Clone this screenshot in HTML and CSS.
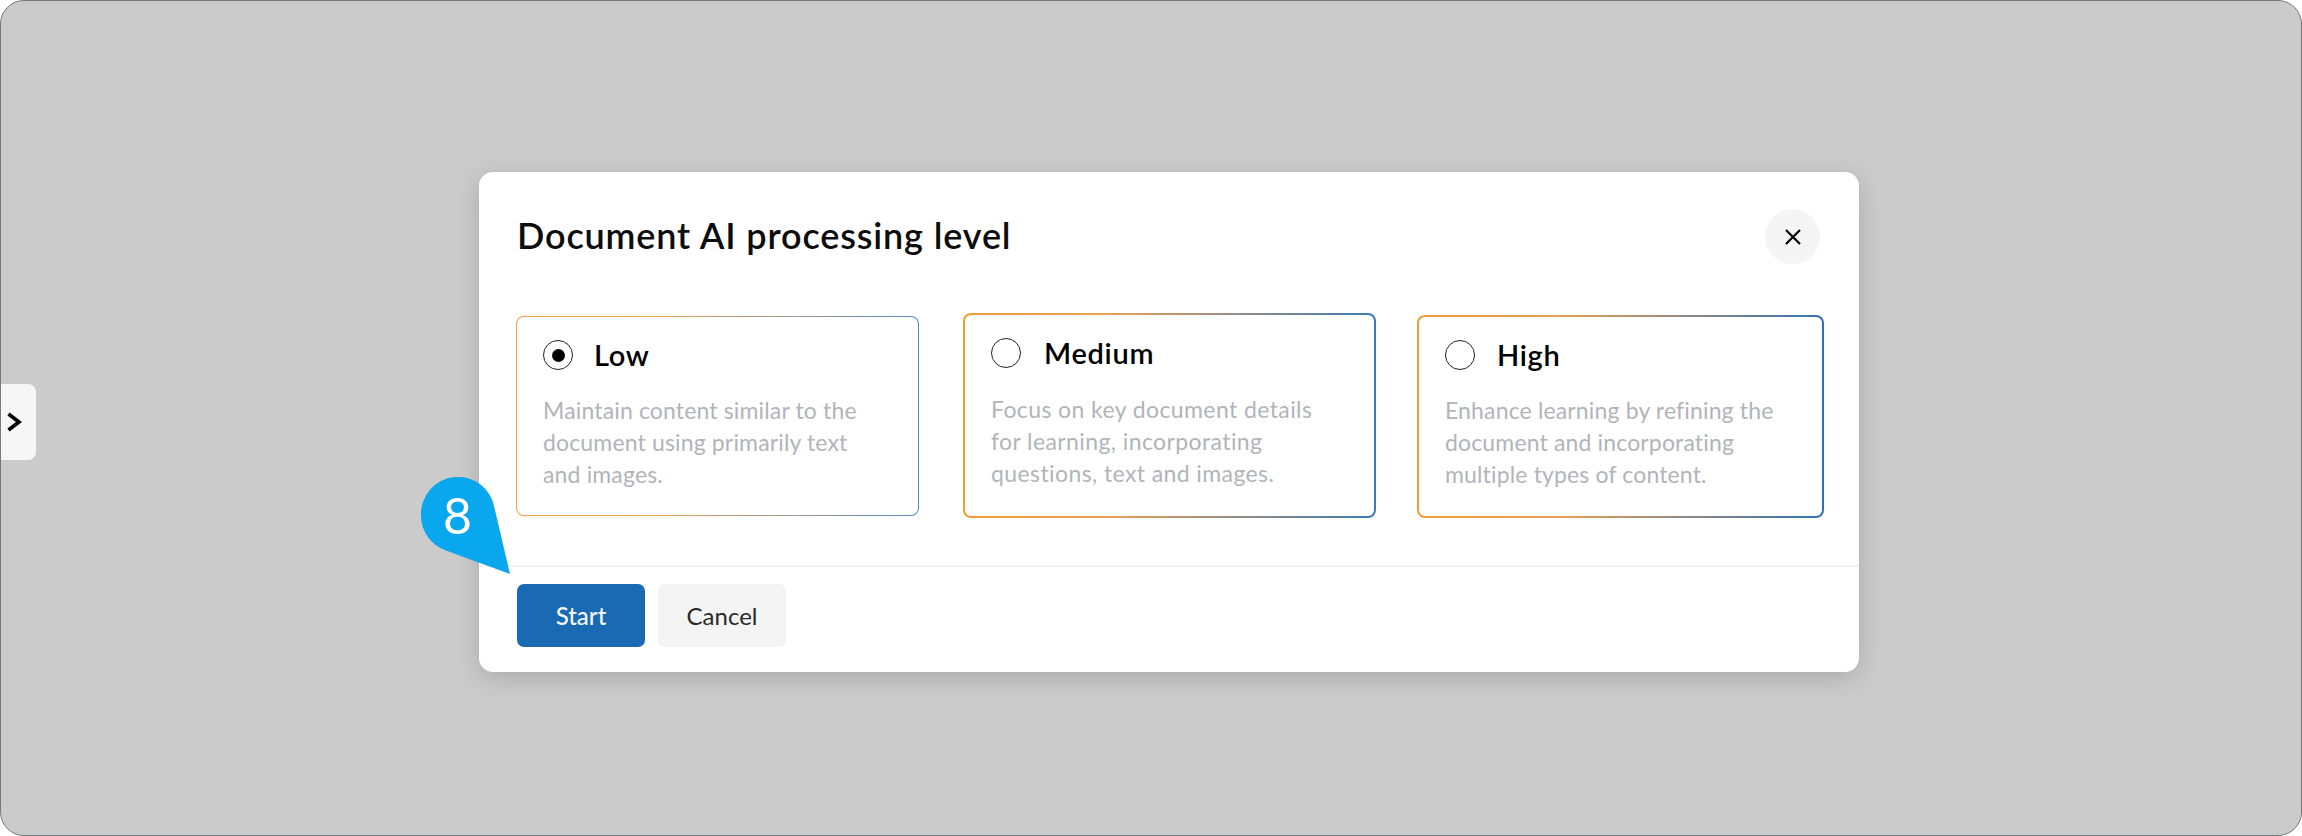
FILE: index.html
```html
<!DOCTYPE html>
<html lang="en">
<head>
<meta charset="utf-8">
<title>Document AI processing level</title>
<link rel="stylesheet" href="styles.css">
</head>
<body>
<div class="frame">
  <button class="side-tab" aria-label="Expand">
    <svg width="16" height="20" viewBox="0 0 16 20"><path d="M2.5 2 L13 10 L2.500 18" fill="none" stroke="#000" stroke-width="3.6"/></svg>
  </button>
  <div class="modal">
    <header class="modal-head">
      <h1 class="modal-title">Document AI processing level</h1>
      <button class="close" aria-label="Close">
        <svg width="18" height="18" viewBox="0 0 18 18"><path d="M2 2 L16 16 M16 2 L2 16" stroke="#000" stroke-width="2.2" fill="none"/></svg>
      </button>
    </header>
    <div class="cards">
      <div class="card card-low">
        <div class="card-head"><span class="radio radio-on"></span><span class="card-title">Low</span></div>
        <p class="card-text">Maintain content similar to the document using primarily text and images.</p>
      </div>
      <div class="card card-medium">
        <div class="card-head"><span class="radio"></span><span class="card-title">Medium</span></div>
        <p class="card-text">Focus on key document details for learning, incorporating questions, text and images.</p>
      </div>
      <div class="card card-high">
        <div class="card-head"><span class="radio"></span><span class="card-title">High</span></div>
        <p class="card-text">Enhance learning by refining the document and incorporating multiple types of content.</p>
      </div>
    </div>
    <footer class="modal-foot">
      <button class="btn btn-primary">Start</button>
      <button class="btn btn-secondary">Cancel</button>
    </footer>
  </div>
  <div class="pin">
    <svg class="pin-shape" width="92" height="100" viewBox="0 0 92 100"><path d="M1 38.5 A37 37 0 0 1 74.500 31 L90 97 L26 73.500 A37 37 0 0 1 1 38.500 Z" fill="#08a7ee"/></svg>
    <span class="pin-num">8</span>
  </div>
</div>
</body>
</html>
```
FILE: styles.css
```css
* { box-sizing: border-box; }
html, body { margin: 0; padding: 0; background: #fff; }
body { font-family: "Lato", "Open Sans", sans-serif; }
.frame {
  position: relative;
  width: 2302px;
  height: 836px;
  background: #cbcbcb;
  border: 1px solid #77797b;
  border-radius: 24px;
  padding: 171px 0 0 478px;
  overflow: hidden;
}
.side-tab {
  position: absolute;
  left: 0;
  top: 383px;
  width: 35px;
  height: 76px;
  padding: 0 0 0 5px;
  border: 0;
  border-radius: 0 8px 8px 0;
  background: #f6f6f6;
  display: flex;
  align-items: center;
  justify-content: flex-start;
}
.modal {
  width: 1380px;
  height: 500px;
  background: #fff;
  border-radius: 14px;
  box-shadow: 0 6px 24px rgba(0, 0, 0, 0.16);
  display: flex;
  flex-direction: column;
}
.modal-head {
  height: 130px;
  padding: 37px 39px 0 38px;
  display: flex;
  justify-content: space-between;
  align-items: flex-start;
}
.modal-title {
  margin: 0;
  font-size: 36px;
  line-height: 53px;
  font-weight: 600;
  color: #0d0d0d;
  letter-spacing: 0.85px;
}
.close {
  width: 55px;
  height: 55px;
  padding: 0;
  border: 0;
  border-radius: 50%;
  background: #f5f5f5;
  display: flex;
  align-items: center;
  justify-content: center;
}
.cards {
  height: 265px;
  padding: 10px 0 0 37px;
  display: flex;
  align-items: flex-start;
  border-bottom: 2px solid #f2f2f2;
}
.card {
  border-style: solid;
  border-color: transparent;
  border-radius: 8px;
}
.card-low {
  width: 403px;
  height: 200px;
  margin: 4px 44px 0 0;
  border-width: 1px;
  padding: 23px 0 0 26px;
  background: linear-gradient(#fff, #fff) padding-box, linear-gradient(90deg, #f0a04a 0%, #eea456 35%, #5089c2 100%) border-box;
}
.card-medium {
  width: 413px;
  height: 205px;
  margin: 1px 41px 0 0;
  border-width: 2px;
  padding: 23px 0 0 26px;
  background: linear-gradient(#fff, #fff) padding-box, linear-gradient(90deg, #f39a36 0%, #e9a055 35%, #3a79b8 100%) border-box;
}
.card-high {
  width: 407px;
  height: 203px;
  margin: 3px 0 0 0;
  border-width: 2px;
  padding: 23px 0 0 26px;
  background: linear-gradient(#fff, #fff) padding-box, linear-gradient(90deg, #f39a36 0%, #e9a055 35%, #2f72b4 100%) border-box;
}
.card-head {
  height: 30px;
  display: flex;
  align-items: center;
  gap: 21px;
}
.card-medium .card-head { gap: 23px; }
.card-high .card-head { gap: 22px; }
.radio {
  width: 30px;
  height: 30px;
  flex: none;
  border: 1.5px solid #222;
  border-radius: 50%;
  display: flex;
  align-items: center;
  justify-content: center;
}
.radio-on::after {
  content: "";
  width: 13px;
  height: 13px;
  border-radius: 50%;
  background: #000;
}
.card-title {
  font-size: 29px;
  line-height: 30px;
  font-weight: 600;
  letter-spacing: 0.7px;
  color: #000;
}
.card-text {
  max-width: 342px;
  margin: 24px 0 0 0;
  font-size: 23px;
  line-height: 32px;
  letter-spacing: 0.15px;
  color: #b1b4b9;
}
.card-medium .card-text {
  margin-top: 25px;
  letter-spacing: 0.4px;
}
.modal-foot {
  padding: 17px 0 0 38px;
  display: flex;
  gap: 13px;
}
.btn {
  width: 128px;
  height: 63px;
  padding: 0;
  border: 0;
  border-radius: 7px;
  font-family: inherit;
  font-size: 24px;
  font-weight: 400;
}
.btn-primary { background: #1a69b3; color: #f4f7fb; font-weight: 500; }
.btn-secondary { background: #f4f4f4; color: #2a2a2a; }
.pin {
  position: absolute;
  left: 419px;
  top: 476px;
  width: 92px;
  height: 100px;
}
.pin-shape { display: block; }
.pin-num {
  position: absolute;
  left: 0;
  top: 10px;
  width: 75px;
  text-align: center;
  font-size: 50px;
  line-height: 56px;
  color: #fff;
}
```
